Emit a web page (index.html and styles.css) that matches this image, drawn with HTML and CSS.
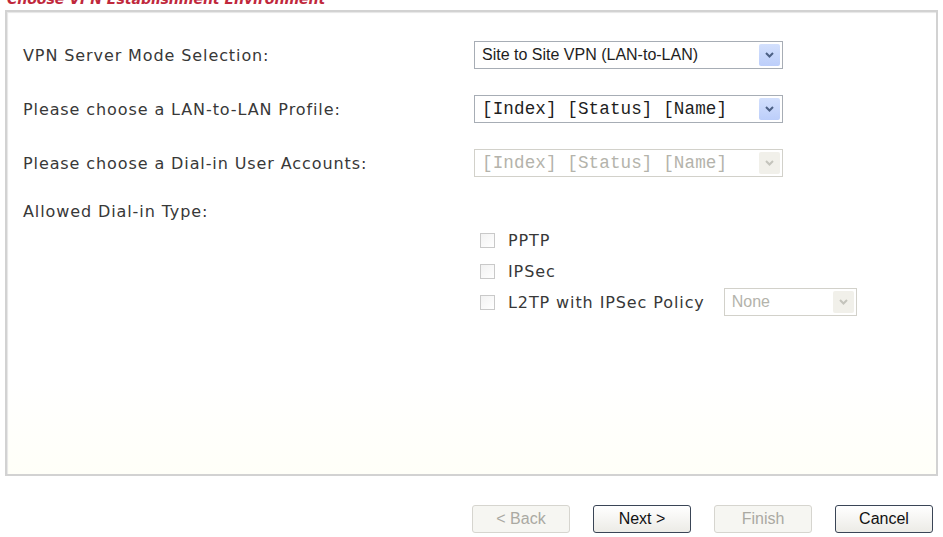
FILE: index.html
```html
<!DOCTYPE html>
<html lang="en">
<head>
  <meta charset="UTF-8" />
  <title>VPN Wizard</title>
  <link rel="stylesheet" href="styles.css">
</head>
<body>
  <div class="page">
    <div class="title">Choose VPN Establishment Environment</div>
    <div class="panel">
      <div class="row">
        <div class="label">VPN Server Mode Selection:</div>
        <div class="dropdown wide">
          <span class="value">Site to Site VPN (LAN-to-LAN)</span>
          <span class="arrow"><svg width="9" height="6" viewBox="0 0 9 6"><path d="M1 1 L4.5 4.5 L8 1" fill="none" stroke="#4d6185" stroke-width="2"/></svg></span>
        </div>
      </div>
      <div class="row">
        <div class="label">Please choose a LAN-to-LAN Profile:</div>
        <div class="dropdown wide">
          <span class="value mono">[Index] [Status] [Name]</span>
          <span class="arrow"><svg width="9" height="6" viewBox="0 0 9 6"><path d="M1 1 L4.5 4.5 L8 1" fill="none" stroke="#4d6185" stroke-width="2"/></svg></span>
        </div>
      </div>
      <div class="row">
        <div class="label">Please choose a Dial-in User Accounts:</div>
        <div class="dropdown wide disabled">
          <span class="value mono">[Index] [Status] [Name]</span>
          <span class="arrow"><svg width="9" height="6" viewBox="0 0 9 6"><path d="M1 1 L4.5 4.5 L8 1" fill="none" stroke="#c4c4bc" stroke-width="2"/></svg></span>
        </div>
      </div>
      <div class="label type">Allowed Dial-in Type:</div>
      <div class="checks">
        <div class="check"><span class="box"></span>PPTP</div>
        <div class="check"><span class="box"></span>IPSec</div>
        <div class="check">
          <span class="box"></span>L2TP with IPSec Policy
          <div class="dropdown small disabled">
            <span class="value">None</span>
            <span class="arrow"><svg width="9" height="6" viewBox="0 0 9 6"><path d="M1 1 L4.5 4.5 L8 1" fill="none" stroke="#c4c4bc" stroke-width="2"/></svg></span>
          </div>
        </div>
      </div>
    </div>
    <div class="buttons">
      <button class="off">&lt; Back</button>
      <button>Next &gt;</button>
      <button class="off">Finish</button>
      <button>Cancel</button>
    </div>
  </div>
</body>
</html>
```

FILE: styles.css
```css
body {
  margin: 0;
  background: #ffffff;
  font-family: 'DejaVu Sans', Verdana, sans-serif;
  font-size: 16px;
  letter-spacing: 0.9px;
  color: #383838;
}
.page {
  padding-left: 5px;
  width: 933px;
}
.title {
  height: 16px;
  line-height: 16px;
  margin-top: -9px;
  padding-left: 2px;
  font-size: 14px;
  letter-spacing: 0;
  font-weight: bold;
  font-style: italic;
  color: #c0283c;
  white-space: nowrap;
}
.panel {
  box-sizing: border-box;
  margin-top: 3px;
  height: 466px;
  padding: 29px 0 0 16px;
  border: 2px solid #d2d2d2;
  box-shadow: inset 1px 1px 1px #e6e6e6;
  background: linear-gradient(#ffffff 80%, #fffff8);
}
.row {
  display: flex;
  align-items: center;
  height: 28px;
  margin-bottom: 26px;
}
.label {
  width: 451px;
  white-space: nowrap;
}
.label.type {
  height: 18px;
  line-height: 18px;
}
.dropdown {
  box-sizing: border-box;
  display: flex;
  align-items: center;
  height: 28px;
  border: 1px solid #a7adb5;
  background: #ffffff;
  padding: 2px;
  font-family: 'Liberation Sans', Arial, sans-serif;
  font-size: 16px;
  letter-spacing: 0;
  color: #1e1e1e;
}
.dropdown.wide {
  width: 309px;
}
.dropdown.small {
  width: 133px;
  margin-left: 19px;
}
.dropdown .value {
  flex: 1;
  padding-left: 5px;
  white-space: nowrap;
  overflow: hidden;
}
.dropdown .value.mono {
  font-family: 'Liberation Mono', 'Courier New', monospace;
  font-size: 17.6px;
  letter-spacing: 0.1px;
}
.dropdown .arrow {
  display: flex;
  align-items: center;
  justify-content: center;
  width: 21px;
  height: 100%;
  background: linear-gradient(#d3e0fd, #bccefa);
  border-radius: 2px;
}
.dropdown.disabled {
  border-color: #d2d1ca;
  color: #b4b3ab;
}
.dropdown.disabled .arrow {
  background: #f1f0ea;
}
.checks {
  margin: 5px 0 0 457px;
  display: flex;
  flex-direction: column;
  gap: 3px;
}
.check {
  display: flex;
  align-items: center;
  height: 28px;
  white-space: nowrap;
}
.box {
  box-sizing: border-box;
  width: 15px;
  height: 15px;
  margin-right: 13px;
  border: 1px solid #c9c9c9;
  background: linear-gradient(135deg, #f2f2f2, #ffffff);
}
.buttons {
  display: flex;
  justify-content: flex-end;
  gap: 23px;
  margin-top: 29px;
  padding-right: 5px;
}
button {
  box-sizing: border-box;
  width: 98px;
  height: 28px;
  border: 1px solid #3a4556;
  border-radius: 3px;
  background: linear-gradient(#ffffff, #ecebe6);
  font-family: 'Liberation Sans', Arial, sans-serif;
  font-size: 16px;
  color: #111111;
  padding: 0;
}
button.off {
  border-color: #d6d5cf;
  background: #f6f6f2;
  color: #aaa9a2;
}
```
